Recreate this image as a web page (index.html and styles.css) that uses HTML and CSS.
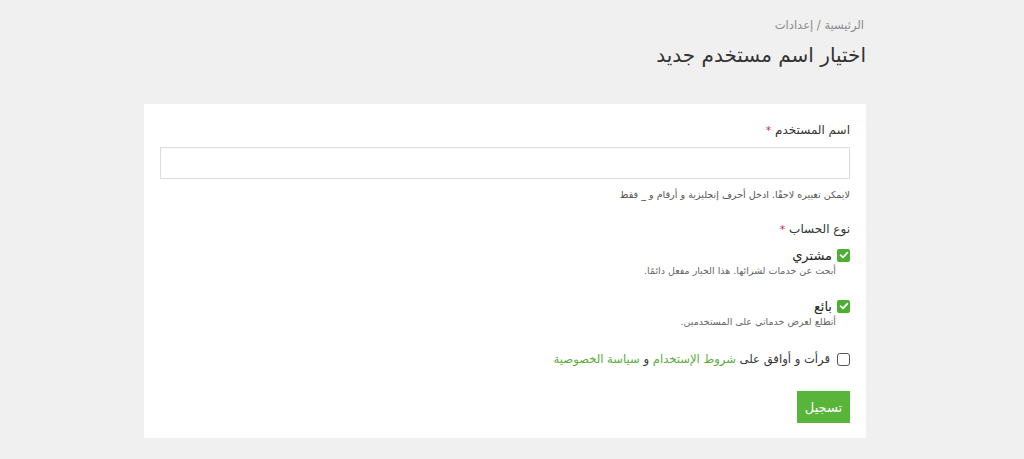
FILE: index.html
```html
<!DOCTYPE html>
<html lang="ar" dir="rtl">
<head>
<meta charset="utf-8">
<title>اختيار اسم مستخدم جديد</title>
<link rel="stylesheet" href="styles.css">
</head>
<body>
<div class="page">
  <div class="breadcrumb">الرئيسية / إعدادات</div>
  <h1 class="title">اختيار اسم مستخدم جديد</h1>
  <div class="card">
    <div class="field">
      <label class="label">اسم المستخدم <span class="req">*</span></label>
      <input class="input" type="text">
      <div class="help">لايمكن تغييره لاحقًا. ادخل أحرف إنجليزية و أرقام و _ فقط</div>
    </div>
    <div class="field">
      <div class="label">نوع الحساب <span class="req">*</span></div>
      <div class="option">
        <div class="option-row">
          <span class="check on"><svg viewBox="0 0 12 12" width="12" height="12"><path d="M2.6 6.2 L5 8.4 L9.4 3.6" fill="none" stroke="#fff" stroke-width="1.8" stroke-linecap="round" stroke-linejoin="round"/></svg></span>
          <span class="option-title">مشتري</span>
        </div>
        <div class="option-desc">أبحث عن خدمات لشرائها. هذا الخيار مفعل دائمًا.</div>
      </div>
      <div class="option">
        <div class="option-row">
          <span class="check on"><svg viewBox="0 0 12 12" width="12" height="12"><path d="M2.6 6.2 L5 8.4 L9.4 3.6" fill="none" stroke="#fff" stroke-width="1.8" stroke-linecap="round" stroke-linejoin="round"/></svg></span>
          <span class="option-title">بائع</span>
        </div>
        <div class="option-desc">أتطلع لعرض خدماتي على المستخدمين.</div>
      </div>
    </div>
    <div class="agree">
      <span class="check off"></span>
      <span>قرأت و أوافق على <a href="#" class="link">شروط الإستخدام</a> و <a href="#" class="link">سياسة الخصوصية</a></span>
    </div>
    <div class="actions">
      <button class="btn" type="button">تسجيل</button>
    </div>
  </div>
</div>
</body>
</html>
```
FILE: styles.css
```css
* { box-sizing: border-box; }
html, body { margin: 0; padding: 0; }
body {
  background: #f0f0f0;
  font-family: "DejaVu Sans", "Noto Sans", sans-serif;
  color: #333;
}
.page {
  width: 722px;
  margin: 0 auto 0 144px;
  padding-top: 16px;
}
.breadcrumb {
  font-size: 11.5px;
  color: #8a8a8a;
  line-height: 18px;
  padding-right: 2px;
}
.title {
  margin: 7px 0 0;
  font-size: 20px;
  font-weight: normal;
  color: #333;
  line-height: 28px;
}
.card {
  margin-top: 35px;
  background: #fff;
  padding: 17px 16px 15px 16px;
}
.label {
  display: block;
  font-size: 12px;
  line-height: 18px;
  color: #333;
}
.req { color: #e0245e; font-size: 11px; }
.input {
  display: block;
  width: 100%;
  height: 32px;
  margin-top: 7px;
  border: 1px solid #dcdcdc;
  background: #fff;
  outline: none;
}
.help {
  margin-top: 9px;
  font-size: 9.6px;
  line-height: 14px;
  color: #555;
  margin-bottom: 18px;
}
.option { margin-top: 7px; }
.option + .option { margin-top: 19px; }
.option-row {
  display: flex;
  align-items: center;
  gap: 5px;
  height: 18px;
}
.check {
  width: 13px;
  height: 13px;
  border-radius: 2px;
  display: inline-flex;
  align-items: center;
  justify-content: center;
  flex: none;
}
.check.on { background: #4caf32; }
.check.off { border: 1px solid #555; background: #fff; border-radius: 3px; }
.option-title {
  font-size: 13px;
  font-weight: normal;
  color: #222;
}
.option-desc {
  font-size: 9.5px;
  line-height: 14px;
  color: #666;
  padding-right: 14px;
}
.agree {
  margin-top: 21px;
  display: flex;
  align-items: center;
  gap: 7px;
  font-size: 11.6px;
  line-height: 18px;
  color: #333;
}
.link { color: #5aaa3c; text-decoration: none; }
.actions { margin-top: 23px; }
.btn {
  background: #58b53a;
  color: #fff;
  border: none;
  font-family: inherit;
  font-size: 13px;
  width: 53px;
  height: 32px;
  padding: 0;
}
```
